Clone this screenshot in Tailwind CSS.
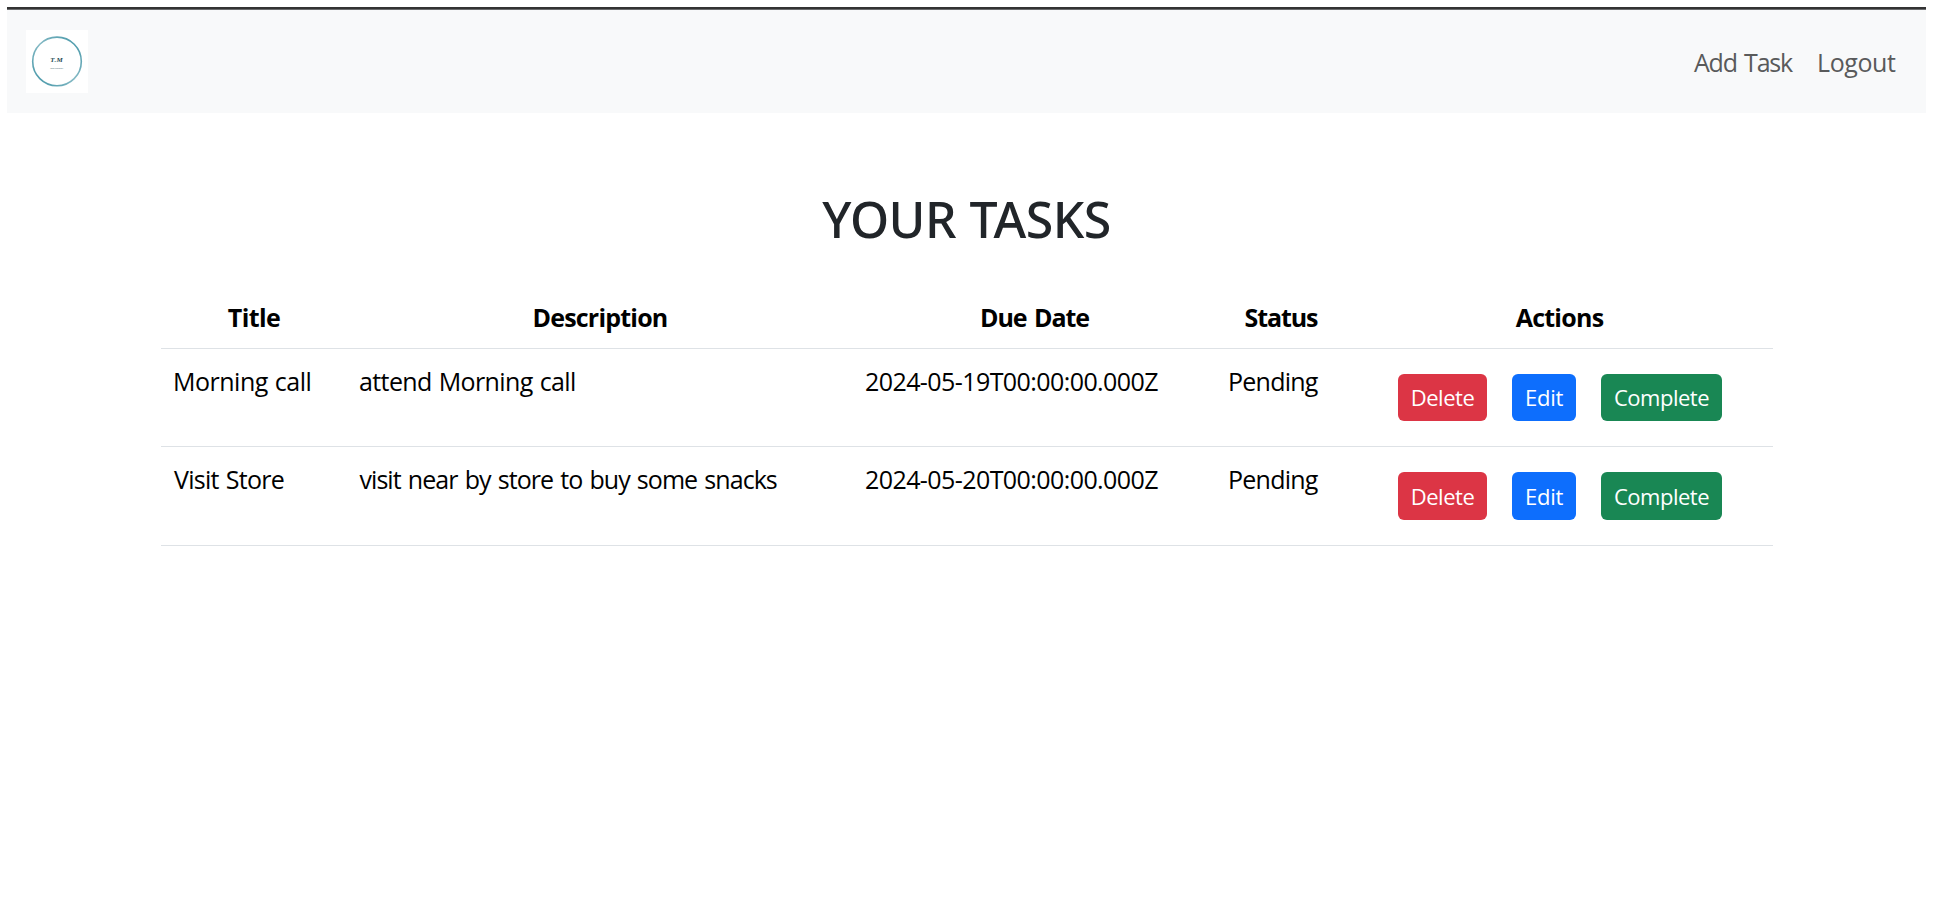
<!DOCTYPE html>
<html lang="en">
<head>
<meta charset="utf-8">
<title>Your Tasks</title>
<script src="https://cdn.jsdelivr.net/npm/@tailwindcss/browser@4"></script>
</head>
<body class="h-[921px] overflow-hidden bg-white pl-[7px] pr-[7px] pt-[7px] font-['Open_Sans','Noto_Sans',sans-serif] text-[25px] leading-[38px] text-black">
  <div class="h-[2px] bg-[#333333]"></div>
  <div class="h-px bg-[#6b6c6e]"></div>
  <nav class="flex h-[103px] items-start justify-between bg-[#f8f9fa] pl-[19px] pr-[31px] pt-[20px]">
    <svg class="h-[63px] w-[62px]" viewBox="0 0 62 63">
      <defs>
        <linearGradient id="ring" x1="1" y1="0" x2="0" y2="1">
          <stop offset="0" stop-color="#3f93a5"/>
          <stop offset="0.5" stop-color="#86bac5"/>
          <stop offset="1" stop-color="#3f93a5"/>
        </linearGradient>
      </defs>
      <rect width="62" height="63" fill="#fff"/>
      <circle cx="31" cy="31.4" r="24.3" fill="none" stroke="url(#ring)" stroke-width="1.6"/>
      <text x="24.3" y="31.8" font-family="Liberation Serif, serif" font-style="italic" font-weight="700" font-size="7" fill="#254a55" textLength="12.5">T.M</text>
      <text x="24.2" y="39.4" font-family="Liberation Sans, sans-serif" font-size="2.1" fill="#4b6b75" textLength="13">Task manager</text>
    </svg>
    <div class="flex pt-[13px] text-[#595a5b]">
      <a class="mr-[25px] tracking-[-1.2px] [word-spacing:2px]">Add Task</a>
      <a class="w-[78px] whitespace-nowrap tracking-[-0.4px]">Logout</a>
    </div>
  </nav>

  <h1 class="mt-[76px] h-[61px] text-center font-['Noto_Sans','Open_Sans',sans-serif] text-[50px] font-medium leading-[60px] tracking-[-0.55px] text-[#212529] [word-spacing:1px]">YOUR TASKS</h1>

  <div class="ml-[154px] mt-[35px] w-[1612px] whitespace-nowrap">
    <div class="grid h-[64px] grid-cols-[186px_506px_363px_130px_427px] border-b border-[#dee2e6] pt-[13px] text-center font-bold">
      <div class="tracking-[-0.6px]">Title</div>
      <div class="tracking-[-0.8px]">Description</div>
      <div class="tracking-[-1.05px] [word-spacing:2px]">Due Date</div>
      <div class="tracking-[-1.1px]">Status</div>
      <div class="tracking-[-0.75px]">Actions</div>
    </div>
    <div class="grid h-[98px] grid-cols-[186px_506px_363px_130px_427px] border-b border-[#dee2e6] pt-[13px]">
      <div class="pl-[12px] tracking-[-0.5px] [word-spacing:1px]">Morning call</div>
      <div class="pl-[12px] tracking-[-0.6px] [word-spacing:1px]">attend Morning call</div>
      <div class="pl-[12px] tracking-[-0.58px]">2024-05-19T00:00:00.000Z</div>
      <div class="pl-[12px] tracking-[-0.75px]">Pending</div>
      <div class="flex h-[47px] gap-[25px] pl-[52px] pt-[12px] text-[22px] leading-[47px] text-white">
        <button class="flex h-[47px] w-[89px] shrink-0 justify-center rounded-[6px] bg-[#dc3545] tracking-[-0.48px]">Delete</button>
        <button class="flex h-[47px] w-[64px] shrink-0 justify-center rounded-[6px] bg-[#0d6efd] tracking-[-0.3px]">Edit</button>
        <button class="flex h-[47px] w-[121px] shrink-0 justify-center rounded-[6px] bg-[#198754] tracking-[-0.5px]">Complete</button>
      </div>
    </div>
    <div class="grid h-[99px] grid-cols-[186px_506px_363px_130px_427px] border-b border-[#dee2e6] pt-[13px]">
      <div class="pl-[13px] tracking-[-0.75px] [word-spacing:1.5px]">Visit Store</div>
      <div class="pl-[12.5px] tracking-[-0.95px] [word-spacing:1.6px]">visit near by store to buy some snacks</div>
      <div class="pl-[12px] tracking-[-0.58px]">2024-05-20T00:00:00.000Z</div>
      <div class="pl-[12px] tracking-[-0.75px]">Pending</div>
      <div class="flex h-[48px] gap-[25px] pl-[52px] pt-[12px] text-[22px] leading-[48px] text-white">
        <button class="h-[48px] w-[89px] shrink-0 rounded-[6px] bg-[#dc3545] tracking-[-0.48px]">Delete</button>
        <button class="h-[48px] w-[64px] shrink-0 rounded-[6px] bg-[#0d6efd] tracking-[-0.3px]">Edit</button>
        <button class="h-[48px] w-[121px] shrink-0 rounded-[6px] bg-[#198754] tracking-[-0.5px]">Complete</button>
      </div>
    </div>
  </div>
</body>
</html>
